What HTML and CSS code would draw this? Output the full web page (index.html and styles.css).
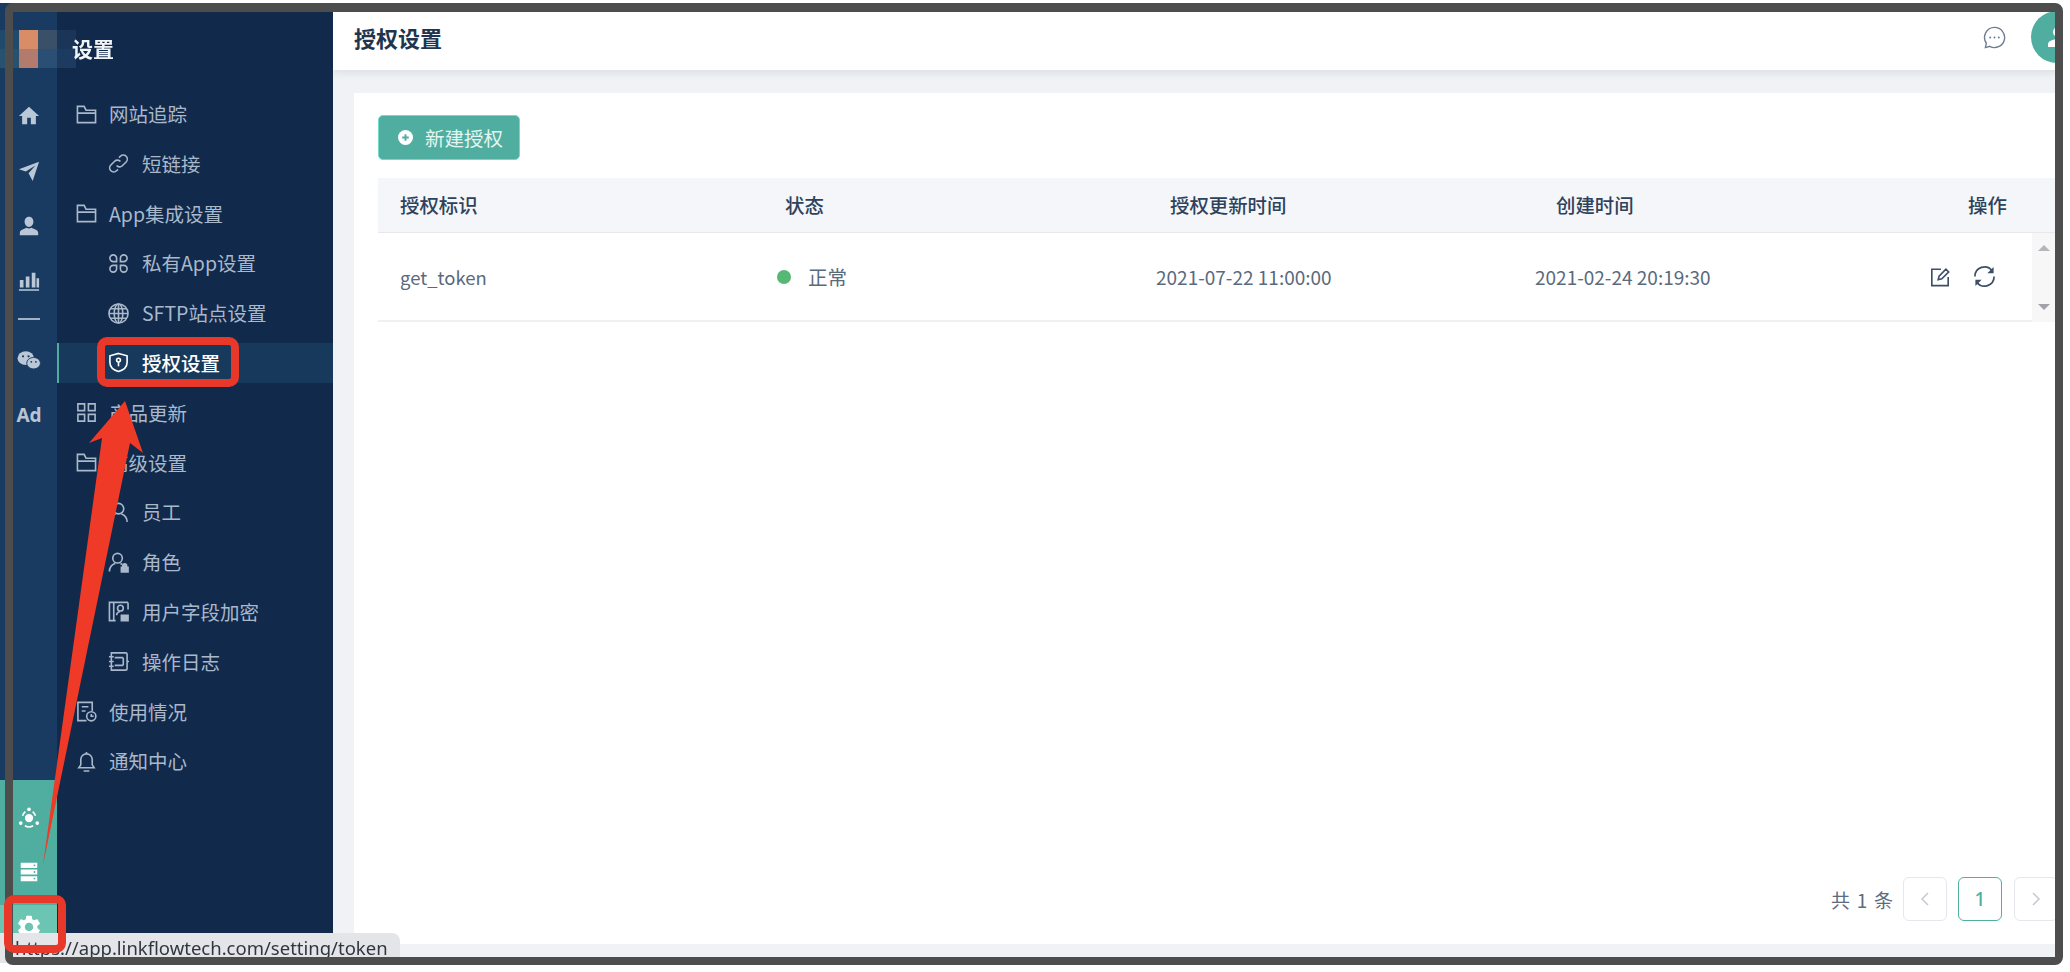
FILE: index.html
```html
<!DOCTYPE html>
<html lang="zh-CN">
<head>
<meta charset="utf-8">
<title>授权设置</title>
<link rel="stylesheet" href="styles.css">
</head>
<body>
<div class="screen">
  <nav class="rail">
    <div class="rail-nav">
      <div class="rail-item"><svg class="ri" viewBox="0 0 24 24"><path d="M10 21v-7h4v7h5.500v-9H23L12 2 1 12h3.500v9z"/></svg></div>
      <div class="rail-item"><svg class="ri" viewBox="0 0 24 24"><path d="M1 10 23 2 16 23 11.500 14.500 19 6 8.500 12.500z"/></svg></div>
      <div class="rail-item"><svg class="ri" viewBox="0 0 24 24"><path d="M12 13c2.800 0 4.800-2.600 4.800-5.600S15 2 12 2 7.200 4.400 7.200 7.400 9.200 13 12 13zm-2.500 1C6 15.500 2 16.500 2 19.500V22h20v-2.500c0-3-4-4-7.500-5.500-1 1-4 1-5 0z"/></svg></div>
      <div class="rail-item"><svg class="ri" viewBox="0 0 24 24"><path d="M2 11h4v8H2zM8.500 7h4v12h-4zM15 3h4v16h-4zM20.200 9h2.800v10h-2.800zM1 21h22v1.500H1z"/></svg></div>
      <div class="rail-sep"></div>
      <div class="rail-item"><svg class="ri wide" viewBox="0 0 26 24"><ellipse cx="9.500" cy="10" rx="9" ry="7.500"/><ellipse cx="18" cy="15.500" rx="7.500" ry="6.300" stroke="#1a3b61"/><circle cx="6.500" cy="8" r="1.200" fill="#1a3b61"/><circle cx="12.500" cy="8" r="1.200" fill="#1a3b61"/><circle cx="15.500" cy="14" r="1" fill="#1a3b61"/><circle cx="20.500" cy="14" r="1" fill="#1a3b61"/></svg></div>
      <div class="rail-item rail-text">Ad</div>
    </div>
    <div class="rail-teal">
      <div class="rail-item tight"><svg class="ri white" viewBox="0 0 24 24"><circle cx="12" cy="12" r="4.500"/><circle cx="12" cy="2.500" r="2"/><circle cx="3" cy="17.500" r="2"/><circle cx="21" cy="17.500" r="2"/><path class="ring" d="M5 9.500A8.500 8.500 0 0 1 8 5M19 9.500A8.500 8.500 0 0 0 16 5M7.500 20.500a9 9 0 0 0 9 0"/></svg></div>
      <div class="rail-item tight"><svg class="ri white" viewBox="0 0 24 24"><path d="M3 2h18v5.500H3zM3 9.200h18v5.600H3zM3 16.500h18V22H3z"/><circle cx="18" cy="4.700" r="1" fill="#4fae9f"/><circle cx="18" cy="12" r="1" fill="#4fae9f"/><circle cx="18" cy="19.200" r="1" fill="#4fae9f"/></svg></div>
    </div>
    <div class="rail-active"><svg class="ri white big" viewBox="0 0 24 24"><path d="M19.140 12.940c.04-.3.06-.61.06-.94 0-.32-.02-.64-.07-.94l2.030-1.580a.49.49 0 0 0 .12-.61l-1.920-3.320a.488.488 0 0 0-.59-.22l-2.390.96c-.5-.38-1.030-.7-1.620-.94l-.36-2.540a.484.484 0 0 0-.48-.41h-3.840c-.24 0-.43.17-.47.41l-.36 2.540c-.59.24-1.130.57-1.620.94l-2.390-.96c-.22-.08-.47 0-.59.22L2.740 8.870c-.12.21-.08.47.12.61l2.030 1.580c-.05.3-.09.63-.09.94s.02.64.07.94l-2.030 1.580a.49.49 0 0 0-.12.61l1.920 3.320c.12.22.37.29.59.22l2.390-.96c.5.38 1.030.7 1.620.94l.36 2.540c.05.24.24.41.48.41h3.840c.24 0 .44-.17.47-.41l.36-2.540c.59-.24 1.130-.56 1.620-.94l2.390.96c.22.08.47 0 .59-.22l1.920-3.320c.12-.22.07-.47-.12-.61l-2.010-1.580zM12 15.600c-1.980 0-3.600-1.620-3.600-3.600s1.620-3.600 3.600-3.600 3.600 1.620 3.600 3.600-1.620 3.600-3.600 3.600z"/></svg></div>
  </nav>

  <aside class="side">
    <h2 class="side-title">设置</h2>
    <ul class="menu">
      <li class="item"><svg class="si" viewBox="0 0 22 22"><path d="M1.500 19.500V2.500h7l2 4h10v13zM1.500 9.500h19"/></svg>网站追踪</li>
      <li class="item sub"><svg class="si" viewBox="0 0 22 22"><path d="M9 13a4 4 0 0 0 6 .4l4-4a4.200 4.200 0 0 0-6-6l-1.500 1.500M13 9a4 4 0 0 0-6-.4l-4 4a4.200 4.200 0 0 0 6 6l1.500-1.500"/></svg>短链接</li>
      <li class="item"><svg class="si" viewBox="0 0 22 22"><path d="M1.500 19.500V2.500h7l2 4h10v13zM1.500 9.500h19"/></svg>App集成设置</li>
      <li class="item sub"><svg class="si" viewBox="0 0 22 22"><path d="M9 9H5.500A3.500 3.500 0 1 1 9 5.500zM13 9h3.500A3.500 3.500 0 1 0 13 5.500zM9 13H5.500A3.500 3.500 0 1 0 9 16.500zM13 13h3.500a3.500 3.500 0 1 1-3.500 3.500z"/></svg>私有App设置</li>
      <li class="item sub"><svg class="si" viewBox="0 0 22 22"><circle cx="11" cy="11" r="10"/><ellipse cx="11" cy="11" rx="4.500" ry="10"/><path d="M1 11h20M2.500 6h17M2.500 16h17M11 1v20"/></svg>SFTP站点设置</li>
      <li class="item sub active"><svg class="si" viewBox="0 0 22 22"><path d="M11 1.500 20 4v7c0 5-4 8-9 9.500C6 19 2 16 2 11V4z"/><circle cx="11" cy="8.500" r="2"/><path d="M11 10.500V15"/></svg>授权设置</li>
      <li class="item"><svg class="si" viewBox="0 0 22 22"><path d="M2 2h7v7H2zM13 2h7v7h-7zM2 13h7v7H2zM13 13h7v7h-7z"/></svg>产品更新</li>
      <li class="item"><svg class="si" viewBox="0 0 22 22"><path d="M1.500 19.500V2.500h7l2 4h10v13zM1.500 9.500h19"/></svg>高级设置</li>
      <li class="item sub"><svg class="si" viewBox="0 0 22 22"><circle cx="11" cy="7" r="5.500"/><path d="M2 21c0-4.500 3-7.500 6-8.500M20 21c0-4.500-3-7.500-6-8.500"/></svg>员工</li>
      <li class="item sub"><svg class="si" viewBox="0 0 22 22"><circle cx="10" cy="6.500" r="5"/><path d="M1.500 20.500c0-4.500 3-7.500 6-8.500M13 12l2 1"/><path class="solid" d="M14 16h7v5h-7zM15.500 16v-1.500a2 2 0 0 1 4 0V16"/></svg>角色</li>
      <li class="item sub"><svg class="si" viewBox="0 0 22 22"><path d="M21 1.500H1.500v19H8M21 1.500V9M6 1.500v19"/><circle cx="13" cy="7.500" r="3"/><path d="M9 15c0-2 1.500-3.500 3.500-4"/><path class="solid" d="M14 15h7v5.500h-7z"/></svg>用户字段加密</li>
      <li class="item sub"><svg class="si" viewBox="0 0 22 22"><path d="M3.500 2h15a1.500 1.500 0 0 1 1.500 1.500v15a1.500 1.500 0 0 1-1.500 1.500h-15zM1 6h5M1 11h5M1 16h5M7 7h9M7 15h9M16 7v8M20 11h2"/></svg>操作日志</li>
      <li class="item"><svg class="si" viewBox="0 0 22 22"><path d="M11 20.500H2V1.500h15v9M6 6h7M6 10.500h4"/><circle cx="16" cy="16" r="4.800"/><path d="M16 13.500V16h2.500"/></svg>使用情况</li>
      <li class="item"><svg class="si" viewBox="0 0 22 22"><path d="M3 17.500h16l-2-3V9a6 6 0 0 0-12 0v5.500zM11 1v2M8 21h6"/></svg>通知中心</li>
    </ul>
  </aside>

  <main class="main">
    <header class="top">
      <h1 class="top-title">授权设置</h1>
      <svg class="msg" viewBox="0 0 24 24"><path d="M12 1.500a10.500 10.500 0 1 1-5 19.700L2.500 22.500l1-4.500A10.500 10.500 0 0 1 12 1.500z"/><circle class="dot" cx="7.500" cy="12" r="1"/><circle class="dot" cx="12" cy="12" r="1"/><circle class="dot" cx="16.500" cy="12" r="1"/></svg>
      <div class="avatar"><svg class="avatar-i" viewBox="0 0 24 24"><path d="M12 12c2.700 0 5-2.300 5-5s-2.300-5-5-5-5 2.300-5 5 2.300 5 5 5zm0 2c-3.300 0-10 1.700-10 5v3h20v-3c0-3.300-6.700-5-10-5z"/></svg></div>
    </header>
    <div class="content">
      <section class="card">
        <button class="btn" type="button"><svg class="btn-i" viewBox="0 0 16 16"><circle cx="8" cy="8" r="8"/><path d="M8 4.500v7M4.500 8h7"/></svg>新建授权</button>
        <div class="table">
          <div class="thead">
            <span class="first">授权标识</span><span>状态</span><span>授权更新时间</span><span>创建时间</span><span class="op">操作</span>
          </div>
          <div class="tbody">
            <div class="row">
              <span class="first token">get_token</span>
              <span class="status"><i class="dot-ok"></i>正常</span>
              <span>2021-07-22 11:00:00</span>
              <span>2021-02-24 20:19:30</span>
              <span class="acts">
                <svg class="act" viewBox="0 0 22 22"><path d="M12 2.500H2v18h18V11M9 14l1-4L17.500 2.500l3 3L13 13z"/></svg>
                <svg class="act" viewBox="0 0 24 24"><path d="M2 12A10 10 0 0 1 20 6M22 12A10 10 0 0 1 4 18"/><path class="fill" d="M21.500 2v6.500H15zM2.500 22v-6.500H9z"/></svg>
              </span>
            </div>
            <div class="vbar"><i class="up"></i><i class="down"></i></div>
          </div>
        </div>
        <div class="pager">
          <span class="total">共 1 条</span>
          <span class="pg"><svg class="chev" viewBox="0 0 10 16"><path d="M8 2 2 8l6 6"/></svg></span>
          <span class="pg cur">1</span>
          <span class="pg"><svg class="chev" viewBox="0 0 10 16"><path d="m2 2 6 6-6 6"/></svg></span>
        </div>
      </section>
    </div>
  </main>

  <div class="mosaic"><i class="m1"></i><i class="m2"></i><i class="m3"></i><i class="m4"></i><i class="m5"></i><i class="m6"></i><i class="m7"></i><i class="m8"></i></div>
  <div class="status-bar">https://app.linkflowtech.com/setting/token</div>
  <div class="frame"></div>
  <div class="mark mark-menu"></div>
  <div class="mark mark-gear"></div>
  <svg class="arrow" viewBox="0 0 150 970"><polygon points="125,401 143,453 130,443 43,865 102,438 89,443"/></svg>
</div>
</body>
</html>
```
FILE: styles.css
```css
* { box-sizing: border-box; }
html, body { margin: 0; height: 100%; background: #fff; overflow: hidden; }
body { font-family: "Noto Sans CJK SC", "Noto Sans", sans-serif; padding-top: 3px; }
h1, h2, ul { margin: 0; padding: 0; }
ul { list-style: none; }

.screen {
  position: relative;
  display: flex;
  width: 2059px;
  height: 958px;
  filter: blur(0.7px);
}

/* icon rail */
.rail {
  width: 57px;
  flex: none;
  display: flex;
  flex-direction: column;
  background: #1a3b61;
  padding-top: 85px;
}
.rail-nav { flex: 1; }
.rail-item { height: 55px; display: flex; align-items: center; justify-content: center; padding-left: 1px; }
.rail-item.tight { height: 54px; }
.rail-sep { height: 2px; width: 22px; margin: 10px 0 12px 18px; background: #9fb2c6; }
.rail-text { color: #b7c5d5; font: 700 19px "Noto Sans", sans-serif; }
.ri { width: 22px; height: 22px; fill: #b9c7d6; }
.ri.wide { width: 24px; }
.ri.white { fill: #fff; }
.ri.big { width: 28px; height: 28px; }
.ring { fill: none; stroke: #fff; stroke-width: 1.800; }
.rail-teal { background: #4fae9f; padding: 11px 0 6px; }
.rail-active { height: 56px; background: #6cc5b2; padding: 8px 0 0 1px; display: flex; justify-content: center; align-items: flex-start; }

/* menu */
.side {
  width: 276px;
  flex: none;
  background: #11294a;
  padding-top: 29px;
}
.side-title { position: relative; z-index: 1; padding-left: 15px; color: #f2f5f8; font-size: 21px; font-weight: 700; line-height: 32px; margin-bottom: 30px; }
.menu { display: flex; flex-direction: column; gap: 9.800px; }
.item {
  height: 40px;
  display: flex;
  align-items: center;
  gap: 12px;
  padding-left: 19px;
  color: #a9b8ca;
  font-size: 19.500px;
  line-height: 40px;
}
.item.sub { padding-left: 51px; gap: 13px; }
.item.active { background: #17395c; color: #fff; border-left: 2px solid #4fae9f; padding-left: 49px; font-weight: 500; }
.si { width: 21px; height: 21px; flex: none; fill: none; stroke: currentColor; stroke-width: 1.700; }
.si .solid { fill: currentColor; }

/* main */
.main { flex: 1; min-width: 0; display: flex; flex-direction: column; background: #f0f2f5; overflow: hidden; }
.top {
  height: 67px;
  flex: none;
  display: flex;
  align-items: center;
  padding-left: 21px;
  padding-top: 1px;
  background: #fff;
  box-shadow: 0 2px 8px rgba(40, 60, 90, .12);
  position: relative;
}
.top-title { flex: 1; font-size: 22px; font-weight: 700; color: #22344d; }
.msg { width: 23px; height: 23px; fill: none; stroke: #6c7c90; stroke-width: 1.400; flex: none; }
.msg .dot { fill: #6c7c90; stroke: none; }
.avatar {
  width: 52px; height: 52px; flex: none;
  margin: 0 -24px 0 25px;
  border-radius: 50%;
  background: #4fae9f;
  display: flex; align-items: center; justify-content: flex-start;
  padding-left: 15px;
}
.avatar-i { width: 24px; height: 24px; fill: #fff; }
.content { flex: 1; display: flex; padding: 23px 0 17px 21px; min-height: 0; }
.card { flex: 1; display: flex; flex-direction: column; background: #fff; padding: 22px 0 23px 24px; min-width: 0; }

.btn {
  width: 142px; height: 45px;
  display: flex; align-items: center; gap: 12px;
  padding: 0 0 0 19px;
  background: #4fae9f;
  border: 1px solid #74d8cb;
  border-radius: 5px;
  color: #e4f5f1;
  font: 400 19.500px "Noto Sans CJK SC", sans-serif;
}
.btn-i { width: 15px; height: 15px; fill: #fff; stroke: #4fae9f; stroke-width: 2; flex: none; }
.btn-i circle { stroke: none; }

.table { margin-top: 18px; }
.thead {
  height: 55px;
  padding-bottom: 2px;
  display: grid;
  grid-template-columns: 407px 385px 386px 412px 1fr;
  align-items: center;
  background: #f4f6f9;
  border-bottom: 1px solid #e6e8eb;
  color: #2f425c;
  font-size: 19.400px;
  font-weight: 500;
}
.first { padding-left: 22px; }
.token { font-size: 18.500px; }
.op { white-space: nowrap; }
.tbody { display: flex; height: 89px; }
.row {
  flex: 1;
  display: grid;
  grid-template-columns: 399px 379px 379px 395px 1fr;
  align-items: center;
  border-bottom: 2px solid #eef0f3;
  color: #5a6a7d;
  font-size: 19px;
}
.status { display: flex; align-items: center; gap: 17px; font-size: 19.500px; }
.dot-ok { width: 14px; height: 14px; border-radius: 50%; background: #55b874; }
.acts { display: flex; align-items: center; gap: 23px; }
.act { width: 20px; height: 20px; fill: none; stroke: #3d4f66; stroke-width: 1.800; }
.act + .act { width: 23px; height: 23px; }
.act .fill { fill: #3d4f66; stroke: none; }
.vbar {
  width: 27px; flex: none;
  background: #f7f7f8;
  display: flex; flex-direction: column; justify-content: space-between;
  padding: 12px 4px 12px 0;
  align-items: center;
}
.up { border: 6px solid transparent; border-top: 0; border-bottom: 6px solid #b4b6b9; width: 12px; height: 6px; }
.down { border: 6px solid transparent; border-bottom: 0; border-top: 6px solid #a0a3a7; width: 12px; height: 6px; }

.pager { margin-top: auto; display: flex; align-items: center; justify-content: flex-end; padding-right: 1px; }
.total { color: #5c6b7f; font-size: 19px; margin-right: 10px; word-spacing: 2.500px; white-space: pre; }
.pg {
  width: 44px; height: 44px;
  display: flex; align-items: center; justify-content: center;
  border: 1.500px solid #e4e7eb;
  border-radius: 6px;
  margin-left: 12px;
  color: #4fae9f;
  font: 500 19px "Noto Sans", sans-serif;
}
.total + .pg { margin-left: 0; }
.pg.cur { border-color: #4fb0a2; margin-left: 11px; }
.chev { width: 10px; height: 16px; fill: none; stroke: #c4cad1; stroke-width: 1.500; }

/* overlays */
.mosaic {
  position: absolute; left: 0; top: 27px;
  width: 76px; height: 38px;
  display: grid; grid-template-columns: repeat(4, 19px); grid-template-rows: repeat(2, 19px);
}
.m1 { background: #1f4a6b; }
.m2 { background: #d98c68; }
.m3 { background: #3a5069; }
.m4 { background: #1b3558; }
.m5 { background: #28506f; }
.m6 { background: #b37a6e; }
.m7 { background: #2b4f74; }
.m8 { background: #1d3b60; }

.status-bar {
  position: absolute; left: 0; bottom: -2px;
  width: 400px; height: 30px;
  padding: 0 0 0 15px;
  background: #e3e5e8;
  border-top-right-radius: 8px;
  color: #30363f;
  font: 400 18.500px/30px "Noto Sans", sans-serif;
  white-space: nowrap;
}
.frame {
  position: absolute; left: 5px; top: 0;
  width: 2058px; height: 962px;
  border: 8px solid #4d4d4d;
  border-top-width: 9px;
  border-radius: 8px;
  pointer-events: none;
}
.mark { position: absolute; border: 8px solid #e8382a; border-radius: 10px; }
.mark-menu { left: 97px; top: 334px; width: 142px; height: 50px; }
.mark-gear { left: 4px; top: 892px; width: 62px; height: 58px; }
.arrow { position: absolute; left: 0; top: -3px; width: 150px; height: 970px; pointer-events: none; }
.arrow polygon { fill: #ee3a26; }
```
